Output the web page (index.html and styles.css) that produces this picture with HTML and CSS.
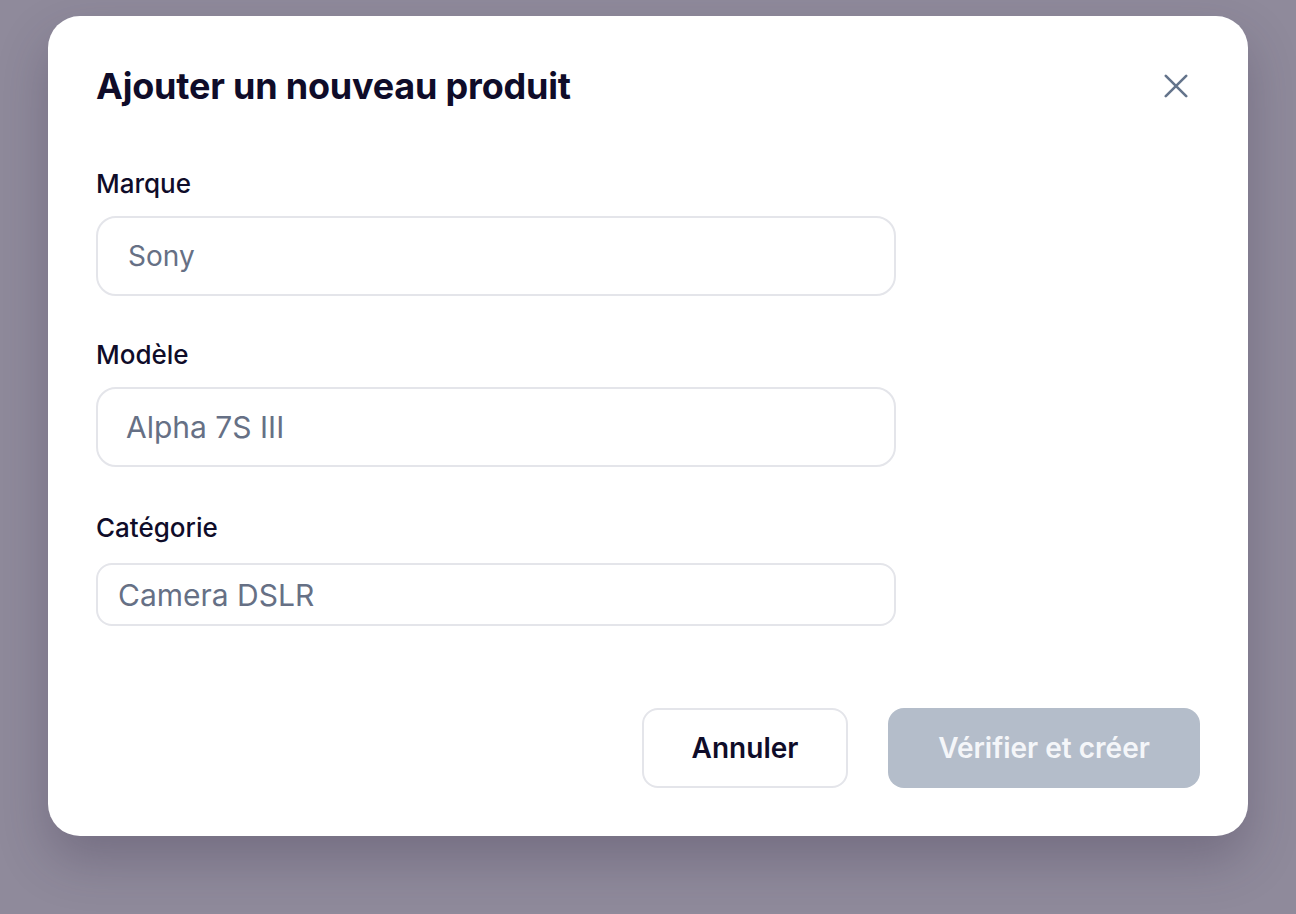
FILE: index.html
```html
<!DOCTYPE html>
<html lang="fr">
<head>
<meta charset="utf-8">
<title>Ajouter un nouveau produit</title>
<link rel="stylesheet" href="styles.css">
</head>
<body>
<div class="modal">
  <div class="header">
    <h1 class="title">Ajouter un nouveau produit</h1>
    <button class="close" aria-label="Fermer">
      <svg width="24" height="24" viewBox="0 0 24 24" fill="none" stroke="#64748b" stroke-width="2.6" stroke-linecap="round"><path d="M1.8 1.8L22.2 22.2M22.2 1.8L1.8 22.2"/></svg>
    </button>
  </div>
  <div class="field field-first">
    <label class="label">Marque</label>
    <div class="input input-a">Sony</div>
  </div>
  <div class="field field-second">
    <label class="label">Modèle</label>
    <div class="input input-b">Alpha 7S III</div>
  </div>
  <div class="field field-third">
    <label class="label">Catégorie</label>
    <div class="input input-c">Camera DSLR</div>
  </div>
  <div class="footer">
    <button class="btn btn-cancel">Annuler</button>
    <button class="btn btn-primary">Vérifier et créer</button>
  </div>
</div>
</body>
</html>
```
FILE: styles.css
```css
html, body {
  margin: 0;
  padding: 0;
}
body {
  background: #8f8a9b;
  height: 914px;
  overflow: hidden;
  font-family: "Inter", "Noto Sans", sans-serif;
  color: #0f0c29;
}
.modal {
  box-sizing: border-box;
  width: 1200px;
  height: 820px;
  margin: 16px 48px 0;
  background: #fff;
  border-radius: 32px;
  padding: 48px;
  display: flex;
  flex-direction: column;
  box-shadow: 0 24px 50px rgba(50, 40, 70, 0.28);
}
.header {
  display: flex;
  justify-content: space-between;
  align-items: center;
  height: 44px;
}
.title {
  margin: 0;
  font-size: 36px;
  line-height: 44px;
  font-weight: 700;
  letter-spacing: -0.2px;
  color: #0f0c29;
}
.close {
  width: 48px;
  height: 48px;
  border: 0;
  background: transparent;
  padding: 0;
  display: flex;
  align-items: center;
  justify-content: center;
}
.field {
  display: flex;
  flex-direction: column;
  width: 800px;
}
.field-first { margin-top: 60px; }
.field-second { margin-top: 43px; }
.field-third { margin-top: 45px; }
.label {
  font-size: 26px;
  line-height: 32px;
  font-weight: 500;
  color: #0f0c29;
  margin-bottom: 16px;
}
.field-third .label { margin-bottom: 19px; }
.input {
  box-sizing: border-box;
  height: 80px;
  border: 2px solid #e4e5ea;
  border-radius: 20px;
  display: flex;
  align-items: center;
  font-size: 30px;
  color: #667085;
}
.input-a {
  padding: 0 30px;
  font-size: 28px;
}
.input-b { padding: 0 28px; }
.input-c {
  height: 63px;
  padding: 0 20px;
  border-radius: 16px;
}
.footer {
  margin-top: auto;
  display: flex;
  justify-content: flex-end;
  gap: 40px;
}
.btn {
  box-sizing: border-box;
  height: 80px;
  border-radius: 16px;
  font-family: "Inter", "Noto Sans", sans-serif;
  font-size: 28px;
  font-weight: 600;
}
.btn-cancel {
  width: 206px;
  background: #fff;
  border: 2px solid #e4e5ea;
  color: #0f0c29;
}
.btn-primary {
  width: 312px;
  background: #b4bdca;
  border: 0;
  color: #f4f6f9;
}
```
